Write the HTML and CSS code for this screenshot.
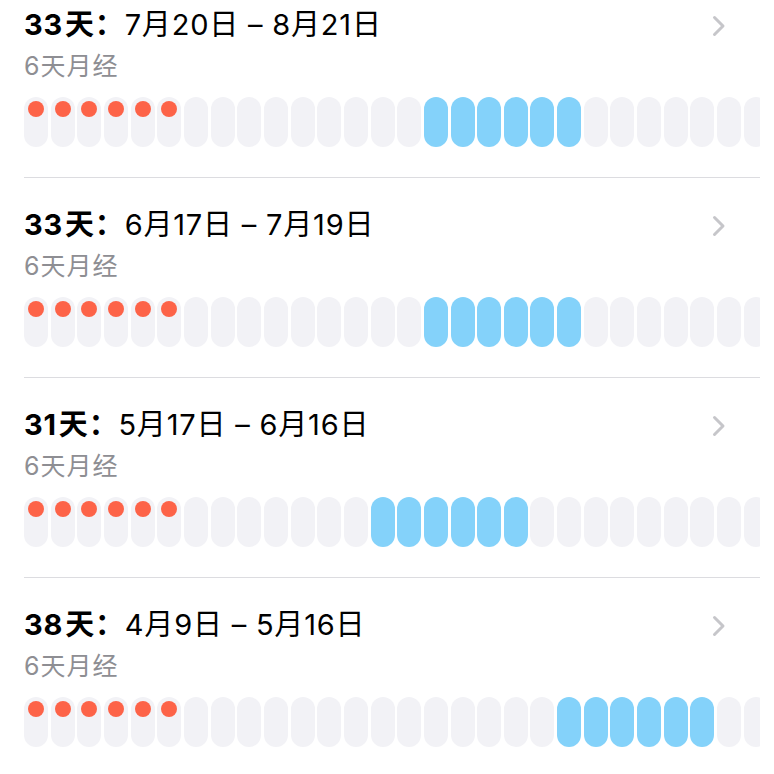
FILE: index.html
```html
<!DOCTYPE html>
<html lang="zh-CN">
<head>
    <meta charset="UTF-8">
    <meta name="viewport" content="width=device-width, initial-scale=1.0">
    <title>周期记录</title>
    <link rel="stylesheet" href="styles.css">
</head>
<body>
    <div class="list" id="list"></div>

    <script>
        // cycle history: length, date range, period days, fertile window start
        const cycles = [
            { days: 33, range: '7月20日 – 8月21日', period: 6, fertile: 15 },
            { days: 33, range: '6月17日 – 7月19日', period: 6, fertile: 15 },
            { days: 31, range: '5月17日 – 6月16日', period: 6, fertile: 13 },
            { days: 38, range: '4月9日 – 5月16日', period: 6, fertile: 20 }
        ];

        const list = document.getElementById('list');

        cycles.forEach(function(c) {
            const row = document.createElement('div');
            row.className = 'cycle';

            let pills = '';
            for (let i = 0; i < c.days; i++) {
                let cls = 'day';
                let dot = '';
                if (i < c.period) dot = '<span class="dot"></span>';
                if (i >= c.fertile && i < c.fertile + 6) cls += ' fertile';
                pills += '<span class="' + cls + '">' + dot + '</span>';
            }

            row.innerHTML =
                '<div class="head">' +
                    '<div class="info">' +
                        '<div class="title"><b>' + c.days + '<span class="unit">天：</span></b>' + c.range + '</div>' +
                        '<div class="sub">' + c.period + '天月经</div>' +
                    '</div>' +
                    '<svg class="chevron" width="14" height="22" viewBox="0 0 14 22"><polyline points="2.5,2.5 11,11 2.5,19.5" /></svg>' +
                '</div>' +
                '<div class="days">' + pills + '</div>';

            list.appendChild(row);
        });
    </script>
</body>
</html>
```

FILE: styles.css
```css
body {
    margin: 0;
    background: #ffffff;
    font-family: Inter, "Noto Sans CJK SC", sans-serif;
    color: #000;
    overflow: hidden;
}
.list {
    margin-top: -22px;
    padding-left: 24px;
    padding-right: 14px;
}
.cycle {
    padding-top: 22px;
    height: 177px;
    border-bottom: 1px solid #dcdce0;
    box-sizing: content-box;
    overflow: hidden;
}
.head {
    display: flex;
    align-items: flex-start;
    justify-content: space-between;
    padding-top: 7px;
}
.title {
    font-size: 29px;
    line-height: 36px;
    letter-spacing: 0.8px;
}
.title b {
    font-weight: 700;
}
.title .unit {
    margin-left: 2px;
}
.sub {
    font-size: 25px;
    line-height: 30px;
    letter-spacing: 1px;
    color: #8e8e93;
    margin-top: 8px;
}
.chevron {
    margin-top: 8px;
    margin-right: 34px;
}
.chevron polyline {
    fill: none;
    stroke: #c6c6ca;
    stroke-width: 3;
    stroke-linecap: round;
    stroke-linejoin: round;
}
.days {
    display: flex;
    gap: 2.67px;
    margin-top: 16px;
    overflow: hidden;
}
.day {
    flex: none;
    width: 24px;
    height: 50px;
    border-radius: 12px;
    background: #f2f2f6;
    display: flex;
    justify-content: center;
    padding-top: 4px;
    box-sizing: border-box;
}
.day.fertile {
    background: #84d2fa;
}
.dot {
    width: 16px;
    height: 16px;
    border-radius: 50%;
    background: #fd6348;
}
```
